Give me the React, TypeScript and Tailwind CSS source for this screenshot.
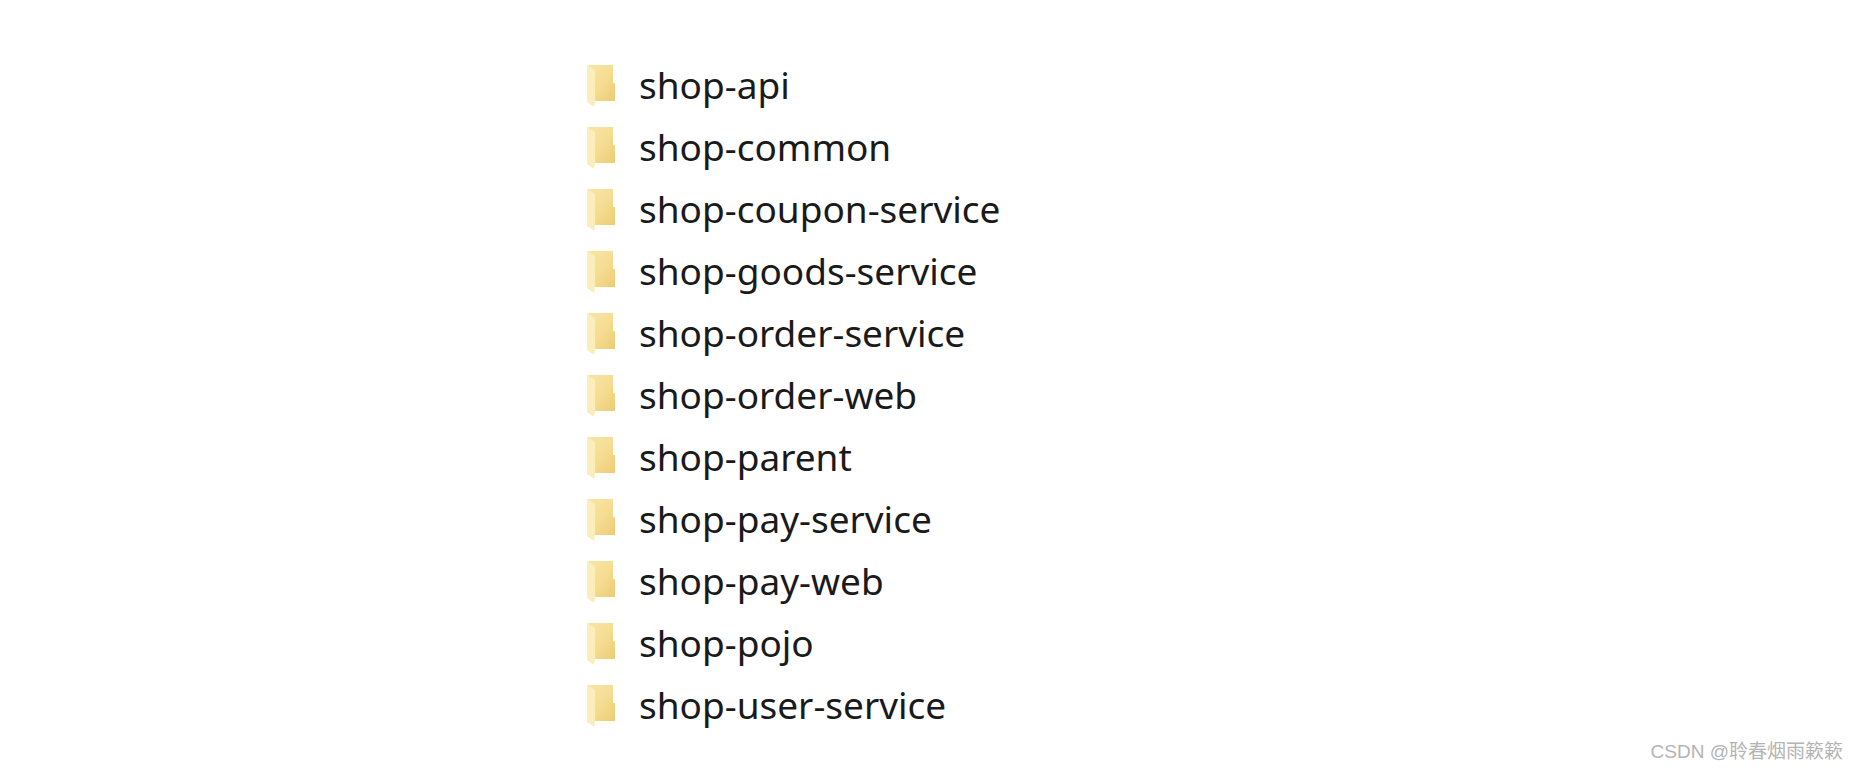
import React from 'react';

const folders = [
  'shop-api',
  'shop-common',
  'shop-coupon-service',
  'shop-goods-service',
  'shop-order-service',
  'shop-order-web',
  'shop-parent',
  'shop-pay-service',
  'shop-pay-web',
  'shop-pojo',
  'shop-user-service',
];

const FolderIcon = () => (
  <svg width="28" height="42" viewBox="0 0 28 42" className="shrink-0 blur-[0.5px]">
    <defs>
      <linearGradient id="folderBody" x1="0" y1="0" x2="1" y2="1">
        <stop offset="0" stopColor="#f8e6a8" />
        <stop offset="0.55" stopColor="#f5dc90" />
        <stop offset="1" stopColor="#eccb72" />
      </linearGradient>
    </defs>
    <path d="M0 0H26V18H28V36H7V6Z" fill="url(#folderBody)" />
    <path d="M0 0L8 5V36L7 42L0 37Z" fill="#fbeebb" />
  </svg>
);

export default function App() {
  return (
    <div className="relative h-[770px] w-full overflow-hidden bg-white font-['Noto_Sans',sans-serif]">
      <div className="flex flex-col gap-[20px] pl-[587px] pt-[65px]">
        {folders.map((name) => (
          <div key={name} className="flex h-[42px] items-center gap-[24px]">
            <FolderIcon />
            <span className="-translate-y-[1px] text-[37px] leading-[42px] text-[#1a1a1a]">{name}</span>
          </div>
        ))}
      </div>
      <div className="absolute bottom-[6px] right-[15px] font-['Liberation_Sans','Noto_Sans_CJK_SC',sans-serif] text-[19px] leading-[24px] text-[#b4b4b4]">
        CSDN @聆春烟雨簌簌
      </div>
    </div>
  );
}
